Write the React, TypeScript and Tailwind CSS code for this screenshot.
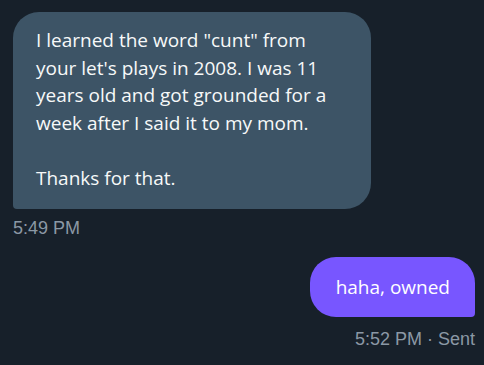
export default function App() {
  return (
    <div className="w-[484px] h-[365px] bg-[#17202a] overflow-hidden pl-[13px] pr-[9px] pt-[12px]">
      {/* received */}
      <div className="flex flex-col items-start">
        <div className="w-[358px] rounded-[26px] rounded-bl-[4px] bg-[#3d5466] px-[23px] pt-[15px] pb-[17px] text-[#f7f9f9] text-[19px] leading-[27.5px] font-['Open_Sans','Noto_Sans',sans-serif]">
          <p>
            I learned the word "cunt" from your let's plays in 2008. I was 11 years old and got grounded for a week after I said it to my mom.
          </p>
          <p className="mt-[27.5px]">Thanks for that.</p>
        </div>
        <span className="mt-[9px] text-[18px] leading-[20px] text-[#8b98a5] font-['Liberation_Sans',Arial,sans-serif]">
          5:49 PM
        </span>
      </div>

      {/* sent */}
      <div className="flex flex-col items-end mt-[19px]">
        <div className="rounded-[26px] rounded-br-[4px] bg-[#7856ff] pl-[26px] pr-[25px] h-[60px] flex items-center text-white text-[19px] font-['Open_Sans','Noto_Sans',sans-serif]">
          haha, owned
        </div>
        <span className="mt-[12px] text-[18px] leading-[20px] text-[#8b98a5] font-['Liberation_Sans',Arial,sans-serif]">
          5:52 PM · Sent
        </span>
      </div>
    </div>
  );
}
